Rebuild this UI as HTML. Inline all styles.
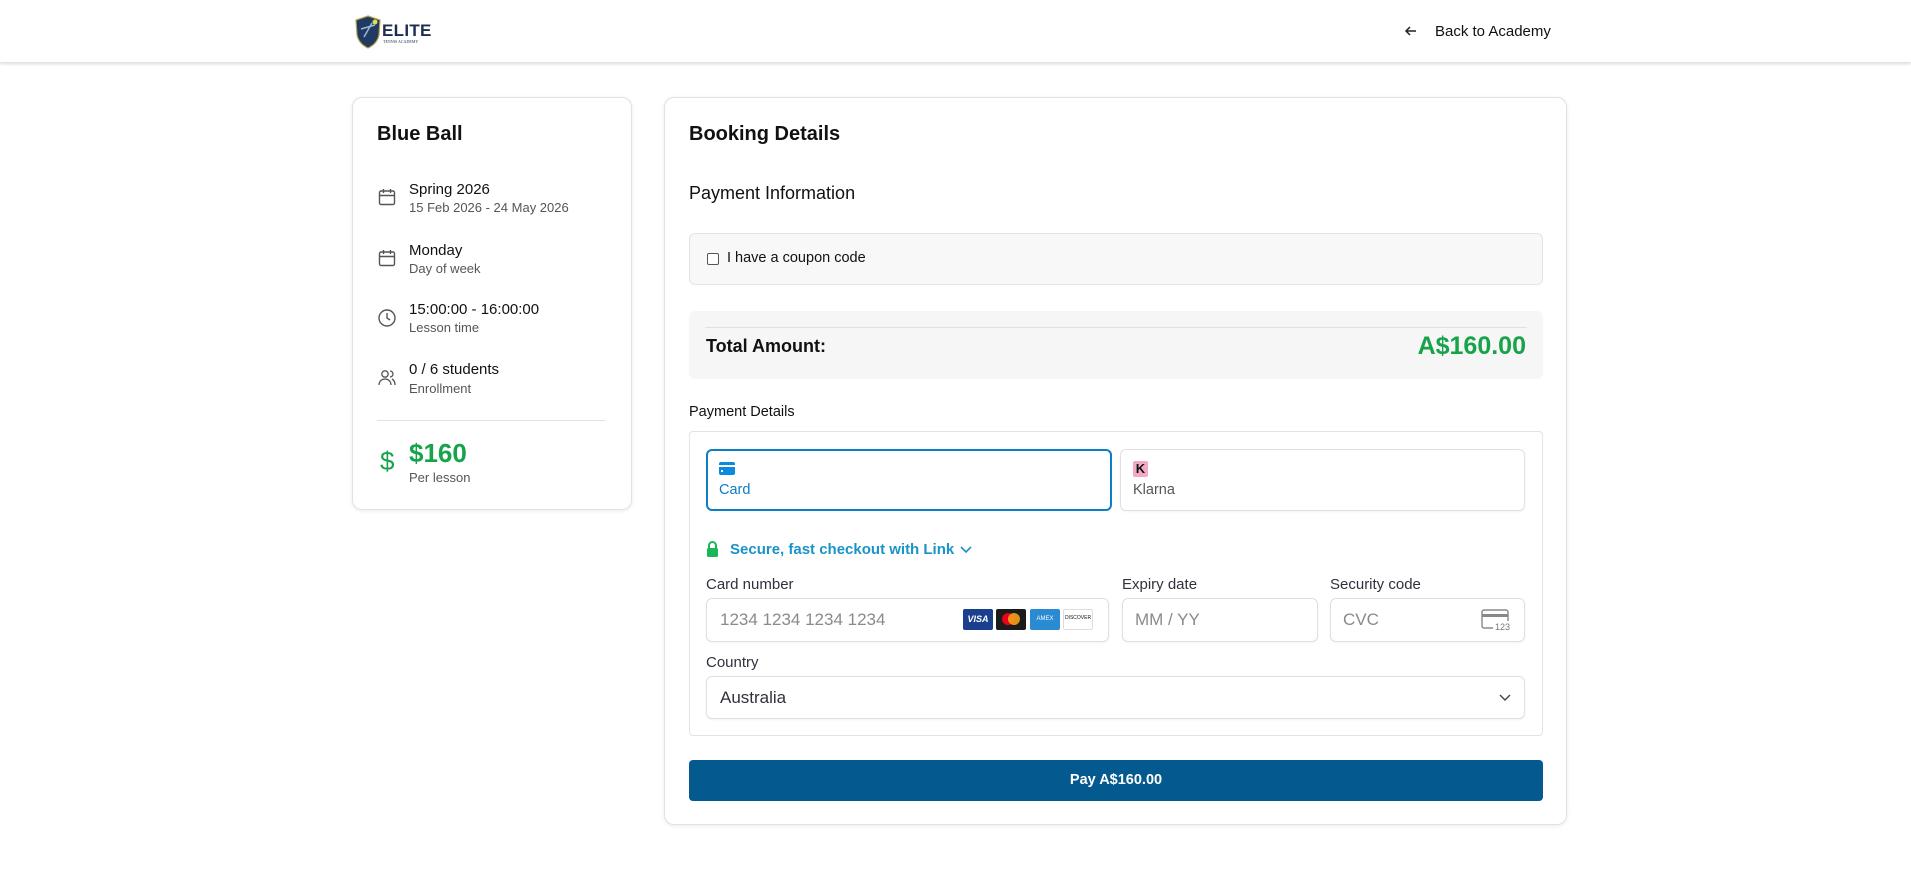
<!DOCTYPE html>
<html><head><meta charset="utf-8"><style>
*{box-sizing:border-box;margin:0;padding:0}
body{width:1911px;height:882px;position:relative;background:#fff;font-family:"Liberation Sans",Arial,sans-serif;color:#111;overflow:hidden}
.a{position:absolute}
.hdr{left:0;top:0;width:1911px;height:63px;background:#fff;box-shadow:0 1px 3px rgba(0,0,0,.15);border-bottom:1px solid #e3e3e3}
.card{background:#fff;border:1px solid #e2e2e2;border-radius:10px;box-shadow:0 1px 4px rgba(0,0,0,.08)}
.t1{font-size:15px;font-weight:500;color:#111}
.t2{font-size:13px;color:#555}
.ic{width:20px;height:20px}
.lbl{font-size:15px;color:#30313d}
.inp{border:1px solid #e0e0e0;border-radius:6px;box-shadow:0 1px 2px rgba(0,0,0,.05);background:#fff}
.ph{font-size:17px;color:#8a8a8a}
</style></head><body>
<div class="a hdr"></div>
<svg class="a" style="left:355px;top:15px" width="26" height="34" viewBox="0 0 26 34"><path d="M13 1 L25 5 L24 20 Q22 29 13 33 Q4 29 2 20 L1 5Z" fill="#1f3b63" stroke="#b9a24a" stroke-width="1.2"/><path d="M6 14 L20 10 M9 22 L17 8" stroke="#9fb6d1" stroke-width="1.5"/><circle cx="20" cy="7" r="2.5" fill="#d9e34a"/></svg>
<div class="a" style="left:382px;top:21px;font-size:17px;font-weight:900;color:#1c2d4f;letter-spacing:.3px">ELITE</div>
<div class="a" style="left:383px;top:39px;font-size:4px;color:#1c2d4f;font-family:'Liberation Serif',serif">TENNIS ACADEMY</div>
<svg class="a" style="left:1404px;top:24px" width="14" height="14" viewBox="0 0 14 14"><path d="M12 7H2M6 3L2 7l4 4" fill="none" stroke="#222" stroke-width="1.5"/></svg>
<div class="a" style="left:1435px;top:23px;font-size:15px;font-weight:500;color:#111">Back to Academy</div>

<div class="a card" style="left:352px;top:97px;width:280px;height:413px"></div>
<div class="a" style="left:377px;top:123px;font-size:20px;font-weight:bold">Blue Ball</div>
<svg class="a ic" style="left:377px;top:187px" viewBox="0 0 20 20"><rect x="2.5" y="4" width="15" height="13.5" rx="1.5" fill="none" stroke="#555" stroke-width="1.4"/><path d="M2.5 8.5h15M6.5 2v4M13.5 2v4" stroke="#555" stroke-width="1.4"/></svg>
<div class="a t1" style="left:409px;top:181px">Spring 2026</div>
<div class="a t2" style="left:409px;top:200px">15 Feb 2026 - 24 May 2026</div>
<svg class="a ic" style="left:377px;top:248px" viewBox="0 0 20 20"><rect x="2.5" y="4" width="15" height="13.5" rx="1.5" fill="none" stroke="#555" stroke-width="1.4"/><path d="M2.5 8.5h15M6.5 2v4M13.5 2v4" stroke="#555" stroke-width="1.4"/></svg>
<div class="a t1" style="left:409px;top:242px">Monday</div>
<div class="a t2" style="left:409px;top:261px">Day of week</div>
<svg class="a ic" style="left:377px;top:308px" viewBox="0 0 20 20"><circle cx="10" cy="10" r="8" fill="none" stroke="#555" stroke-width="1.4"/><path d="M10 5v5l3 2" fill="none" stroke="#555" stroke-width="1.4"/></svg>
<div class="a t1" style="left:409px;top:301px">15:00:00 - 16:00:00</div>
<div class="a t2" style="left:409px;top:320px">Lesson time</div>
<svg class="a ic" style="left:377px;top:368px" viewBox="0 0 20 20"><circle cx="8" cy="6" r="3.2" fill="none" stroke="#555" stroke-width="1.3"/><path d="M2 17c0-4 3-6 6-6s6 2 6 6M13 3a3 3 0 010 6M15 11c2 1 3 3 3 6" fill="none" stroke="#555" stroke-width="1.3"/></svg>
<div class="a t1" style="left:409px;top:361px">0 / 6 students</div>
<div class="a t2" style="left:409px;top:381px">Enrollment</div>
<div class="a" style="left:377px;top:420px;width:229px;height:1px;background:#e2e2e2"></div>
<div class="a" style="left:380px;top:446px;font-size:26px;color:#16a34a">$</div>
<div class="a" style="left:409px;top:438px;font-size:26px;font-weight:bold;color:#16a34a">$160</div>
<div class="a t2" style="left:409px;top:470px">Per lesson</div>

<div class="a card" style="left:664px;top:97px;width:903px;height:728px"></div>
<div class="a" style="left:689px;top:123px;font-size:20px;font-weight:bold">Booking Details</div>
<div class="a" style="left:689px;top:183px;font-size:18px;font-weight:500">Payment Information</div>
<div class="a" style="left:689px;top:233px;width:854px;height:52px;background:#f8f8f8;border:1px solid #e3e3e3;border-radius:6px"></div>
<div class="a" style="left:707px;top:253px;width:12px;height:12px;border:1px solid #555;border-radius:2px;background:#fff"></div>
<div class="a" style="left:727px;top:250px;font-size:14.5px;font-weight:500">I have a coupon code</div>
<div class="a" style="left:689px;top:311px;width:854px;height:68px;background:#f6f6f6;border-radius:6px"></div>
<div class="a" style="left:705px;top:327px;width:822px;height:1px;background:#e0e0e0"></div>
<div class="a" style="left:706px;top:336px;font-size:18px;font-weight:bold">Total Amount:</div>
<div class="a" style="right:385px;top:332px;font-size:25px;font-weight:bold;color:#16a34a">A$160.00</div>
<div class="a" style="left:689px;top:404px;font-size:14.5px;font-weight:500">Payment Details</div>
<div class="a" style="left:689px;top:431px;width:854px;height:305px;border:1px solid #e3e3e3;border-radius:4px"></div>
<div class="a" style="left:706px;top:449px;width:406px;height:62px;border:2px solid #0c7ec2;border-radius:6px"></div>
<svg class="a" style="left:719px;top:462px" width="16" height="13" viewBox="0 0 16 13"><rect width="16" height="13" rx="2" fill="#0c8ae0"/><rect y="3" width="16" height="2" fill="#fff"/><rect x="2" y="8" width="2" height="2" fill="#fff"/></svg>
<div class="a" style="left:719px;top:482px;font-size:14.5px;color:#0c7ec2;font-weight:500">Card</div>
<div class="a" style="left:1120px;top:449px;width:405px;height:62px;border:1px solid #e0e0e0;border-radius:6px;box-shadow:0 1px 2px rgba(0,0,0,.05)"></div>
<div class="a" style="left:1133px;top:461px;width:15px;height:16px;background:#f4a8c8;border-radius:2px;font-size:13px;font-weight:bold;text-align:center;line-height:16px">K</div>
<div class="a" style="left:1133px;top:482px;font-size:14.5px;color:#555">Klarna</div>
<svg class="a" style="left:706px;top:541px" width="13" height="16" viewBox="0 0 13 16"><path d="M3 7V4.5a3.5 3.5 0 017 0V7" fill="none" stroke="#1bb55a" stroke-width="2"/><rect x="1" y="7" width="11" height="9" rx="1.5" fill="#1bb55a"/></svg>
<div class="a" style="left:730px;top:541px;font-size:15px;font-weight:bold;color:#1a93c9">Secure, fast checkout with Link</div>
<svg class="a" style="left:960px;top:546px" width="12" height="8" viewBox="0 0 12 8"><path d="M1 1l5 5 5-5" fill="none" stroke="#1a93c9" stroke-width="1.6"/></svg>
<div class="a lbl" style="left:706px;top:576px">Card number</div>
<div class="a lbl" style="left:1122px;top:576px">Expiry date</div>
<div class="a lbl" style="left:1330px;top:576px">Security code</div>
<div class="a inp" style="left:706px;top:598px;width:403px;height:44px"></div>
<div class="a ph" style="left:720px;top:610px">1234 1234 1234 1234</div>
<div class="a" style="left:963px;top:609px;width:30px;height:21px;background:#1a3f8c;border-radius:2px;color:#fff;font-size:9px;font-weight:bold;font-style:italic;text-align:center;line-height:21px">VISA</div>
<div class="a" style="left:996px;top:609px;width:30px;height:21px;background:#1b1b1b;border-radius:2px"><div class="a" style="left:6px;top:4px;width:12px;height:12px;border-radius:50%;background:#eb001b"></div><div class="a" style="left:12px;top:4px;width:12px;height:12px;border-radius:50%;background:#f79e1b;opacity:.9"></div></div>
<div class="a" style="left:1030px;top:609px;width:30px;height:21px;background:#2a8bd3;border-radius:2px;color:#fff;font-size:6px;text-align:center;line-height:21px">AMEX</div>
<div class="a" style="left:1063px;top:609px;width:30px;height:21px;background:#fff;border:1px solid #ddd;border-radius:2px;font-size:5px;text-align:center;line-height:16px">DISCOVER</div>
<div class="a inp" style="left:1122px;top:598px;width:196px;height:44px"></div>
<div class="a ph" style="left:1135px;top:610px">MM / YY</div>
<div class="a inp" style="left:1330px;top:598px;width:195px;height:44px"></div>
<div class="a ph" style="left:1343px;top:610px">CVC</div>
<svg class="a" style="left:1481px;top:609px" width="30" height="22" viewBox="0 0 30 22"><rect x="1" y="1" width="26" height="18" rx="2" fill="none" stroke="#888" stroke-width="1.4"/><rect x="1" y="5" width="26" height="3" fill="#888"/><rect x="12" y="12" width="18" height="10" fill="#fff"/><text x="14" y="21" font-size="9" fill="#777" font-family="Liberation Sans">123</text></svg>
<div class="a lbl" style="left:706px;top:654px">Country</div>
<div class="a inp" style="left:706px;top:676px;width:819px;height:43px"></div>
<div class="a" style="left:720px;top:688px;font-size:17px;color:#30313d">Australia</div>
<svg class="a" style="left:1499px;top:694px" width="12" height="8" viewBox="0 0 12 8"><path d="M1 1l5 5 5-5" fill="none" stroke="#444" stroke-width="1.4"/></svg>
<div class="a" style="left:689px;top:760px;width:854px;height:41px;background:#04598f;border-radius:4px;color:#fff;font-size:14.5px;font-weight:bold;text-align:center;line-height:41px">Pay A$160.00</div>
</body></html>
